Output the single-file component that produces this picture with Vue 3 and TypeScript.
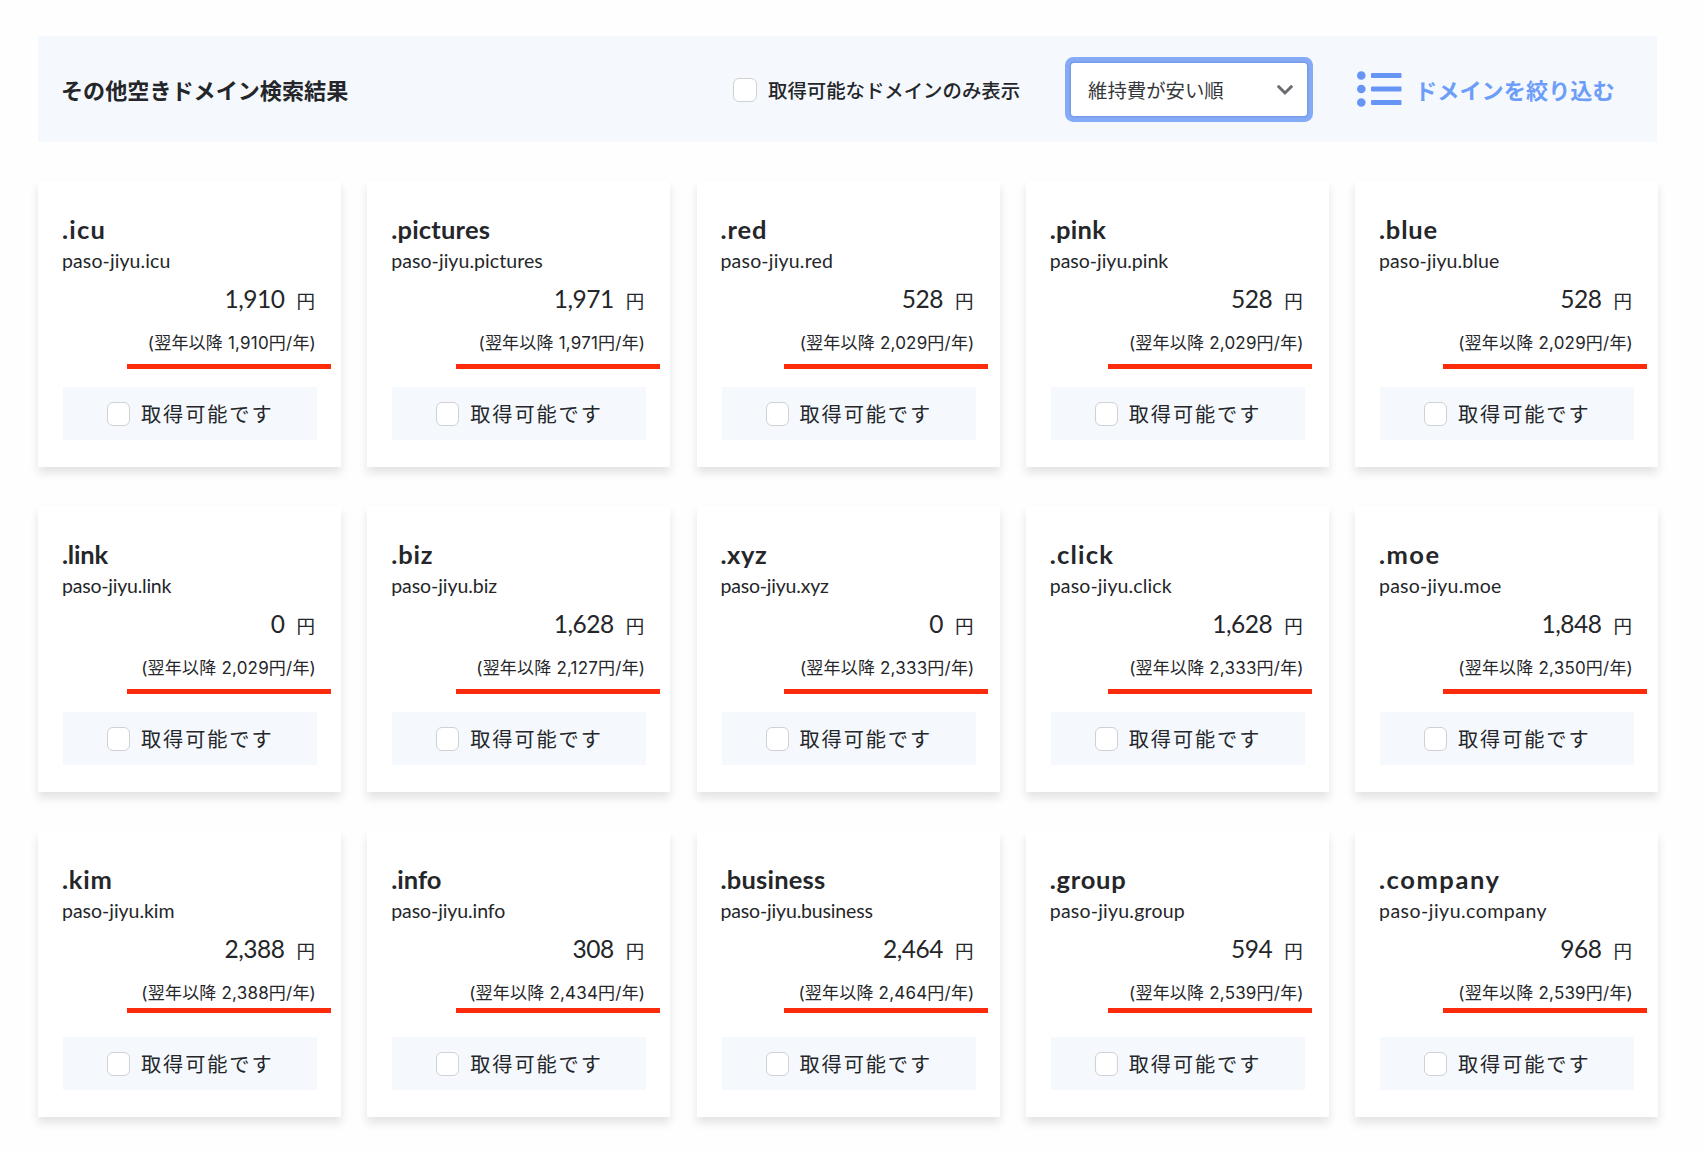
<script setup lang="ts">
import { ref } from 'vue'

interface Domain {
  tld: string
  price: string
  renewal: string
  tldWidth: number
  nameWidth: number
}

const domains: Domain[] = [
  { tld: 'icu', price: '1,910', renewal: '1,910', tldWidth: 40.5, nameWidth: 106.5 },
  { tld: 'pictures', price: '1,971', renewal: '1,971', tldWidth: 97.5, nameWidth: 150 },
  { tld: 'red', price: '528', renewal: '2,029', tldWidth: 43.5, nameWidth: 110.5 },
  { tld: 'pink', price: '528', renewal: '2,029', tldWidth: 55.5, nameWidth: 117.5 },
  { tld: 'blue', price: '528', renewal: '2,029', tldWidth: 56.5, nameWidth: 119 },
  { tld: 'link', price: '0', renewal: '2,029', tldWidth: 45.5, nameWidth: 108.5 },
  { tld: 'biz', price: '1,628', renewal: '2,127', tldWidth: 39.5, nameWidth: 105 },
  { tld: 'xyz', price: '0', renewal: '2,333', tldWidth: 44.5, nameWidth: 107.5 },
  { tld: 'click', price: '1,628', renewal: '2,333', tldWidth: 62.5, nameWidth: 121 },
  { tld: 'moe', price: '1,848', renewal: '2,350', tldWidth: 58.5, nameWidth: 121 },
  { tld: 'kim', price: '2,388', renewal: '2,388', tldWidth: 47.5, nameWidth: 110.5 },
  { tld: 'info', price: '308', renewal: '2,434', tldWidth: 48.5, nameWidth: 113 },
  { tld: 'business', price: '2,464', renewal: '2,464', tldWidth: 103.5, nameWidth: 151 },
  { tld: 'group', price: '594', renewal: '2,539', tldWidth: 74.5, nameWidth: 134 },
  { tld: 'company', price: '968', renewal: '2,539', tldWidth: 119.5, nameWidth: 166.5 },
]

const onlyAvailable = ref(false)
const selected = ref<string[]>([])

// Tracking that sets a line of Latin text to the given width
const ctx = document.createElement('canvas').getContext('2d')
function tracking(text: string, font: string, width: number): string {
  if (!ctx) return '0px'
  ctx.font = font
  const m = ctx.measureText(text)
  const ink = m.actualBoundingBoxRight + m.actualBoundingBoxLeft
  return ((width - ink) / (text.length - 1)).toFixed(3) + 'px'
}
</script>

<template>
  <main class="page">
    <header class="bar">
      <h1 class="heading">その他空きドメイン検索結果</h1>
      <label class="only">
        <input v-model="onlyAvailable" type="checkbox" class="check" />
        <span>取得可能なドメインのみ表示</span>
      </label>
      <button type="button" class="sort">
        <span>維持費が安い順</span>
        <svg width="18" height="12" viewBox="0 0 18 12" fill="none">
          <path d="M1.8 1.8 9 9l7.200-7.200" stroke="#6b6c70" stroke-width="3" />
        </svg>
      </button>
      <a class="narrow">
        <svg width="45" height="36" viewBox="0 0 45 36" fill="#6795f5">
          <circle cx="4.300" cy="4.500" r="4.300" />
          <circle cx="4.300" cy="18" r="4.300" />
          <circle cx="4.300" cy="31.500" r="4.300" />
          <rect x="14" y="2" width="30.500" height="5" rx="1" />
          <rect x="14" y="15.500" width="30.500" height="5" rx="1" />
          <rect x="14" y="29" width="30.500" height="5" rx="1" />
        </svg>
        <span>ドメインを絞り込む</span>
      </a>
    </header>

    <section class="grid">
      <article v-for="d in domains" :key="d.tld" class="card">
        <h2 class="tld" :style="{ letterSpacing: tracking('.' + d.tld, '700 25.5px Lato', d.tldWidth) }">.{{ d.tld }}</h2>
        <p class="name" :style="{ letterSpacing: tracking('paso-jiyu.' + d.tld, '400 19.5px Lato', d.nameWidth) }">paso-jiyu.{{ d.tld }}</p>
        <p class="price"><span class="amount">{{ d.price }}</span><span class="yen">円</span></p>
        <p class="renewal">(翌年以降 {{ d.renewal }}円/年)</p>
        <label class="take">
          <input v-model="selected" type="checkbox" :value="d.tld" class="check small" />
          <span>取得可能です</span>
        </label>
        <i class="mark"></i>
      </article>
    </section>
  </main>
</template>

<style>
body {
  margin: 0;
  background: #fefefe;
}
</style>

<style scoped>
.page {
  box-sizing: border-box;
  width: 1704px;
  height: 1152px;
  padding: 36px 45px 0 38px;
  overflow: hidden;
  color: #242629;
  font-family: 'Noto Sans CJK JP', sans-serif;
}
h1, h2, p {
  margin: 0;
}
.bar {
  box-sizing: border-box;
  display: flex;
  align-items: center;
  width: 1619px;
  height: 106px;
  padding-left: 23px;
  background: #f5f9fe;
}
.heading {
  width: 672px;
  font-size: 22.1px;
  line-height: 32px;
  font-weight: 700;
  white-space: nowrap;
}
.check {
  appearance: none;
  box-sizing: border-box;
  flex: none;
  width: 24px;
  height: 24px;
  margin: 0;
  border: 1.5px solid #d0d1d5;
  border-radius: 6px;
  background: #fff;
}
.only {
  display: flex;
  align-items: center;
  gap: 11px;
  width: 338px;
  padding-top: 1px;
  font-size: 19.4px;
  line-height: 28px;
  font-weight: 500;
  white-space: nowrap;
}
.sort {
  box-sizing: border-box;
  display: flex;
  align-items: center;
  justify-content: space-between;
  flex: none;
  width: 236px;
  height: 53px;
  margin: 0;
  padding: 2px 13px 0 17px;
  border: 0;
  border-radius: 3px;
  background: #fff;
  box-shadow: 0 0 0 1.5px #779ce8, 0 0 0 6px #85abf7;
  color: #36383b;
  font: 400 19.4px/28px 'Noto Sans CJK JP', sans-serif;
}
.narrow {
  display: flex;
  align-items: center;
  gap: 13px;
  margin-left: 50px;
  color: #6c9df8;
  font-size: 22.1px;
  line-height: 32px;
  font-weight: 700;
  white-space: nowrap;
}
.narrow span {
  letter-spacing: 0.1px;
}
.grid {
  display: grid;
  grid-template-columns: repeat(5, 303px);
  justify-content: space-between;
  row-gap: 39px;
  width: 1620px;
  margin-top: 39px;
}
.card {
  position: relative;
  box-sizing: border-box;
  display: flex;
  flex-direction: column;
  height: 286px;
  padding: 32px 25px 0 24px;
  background: #fff;
  box-shadow: 0 6px 9px rgba(0, 0, 0, 0.11);
}
.tld {
  font: 700 25.5px/32px Lato, sans-serif;
  white-space: nowrap;
}
.name {
  font: 400 19.5px/32px Lato, sans-serif;
  white-space: nowrap;
}
.price {
  display: flex;
  align-items: baseline;
  justify-content: flex-end;
  gap: 12px;
  padding-right: 1px;
  line-height: 40px;
  height: 40px;
  margin-top: 2px;
}
.amount {
  font: 400 24.5px/40px Lato, sans-serif;
  letter-spacing: -0.5px;
}
.yen {
  font-size: 18.5px;
}
.renewal {
  height: 32px;
  margin-top: 8px;
  font: 400 17px/32px Inter, 'Noto Sans CJK JP', sans-serif;
  letter-spacing: 0.2px;
  text-align: right;
  white-space: nowrap;
}
.take {
  box-sizing: border-box;
  display: flex;
  align-items: center;
  gap: 11px;
  width: 254px;
  height: 53px;
  margin-top: 28px;
  margin-left: 1px;
  padding-left: 44px;
  background: #f5f9fe;
  font-size: 20.2px;
  line-height: 30px;
  letter-spacing: 1.9px;
  white-space: nowrap;
}
.small {
  width: 23px;
}
.mark {
  position: absolute;
  left: 89px;
  bottom: 98.500px;
  width: 204px;
  height: 5px;
  background: #fb2b0b;
}
.card:nth-child(5n + 3) .mark {
  left: 87px;
}
.card:nth-child(5n + 4) .mark {
  left: 82px;
}
.card:nth-child(5n) .mark {
  left: 88px;
}
.card:nth-child(n + 11) .mark {
  bottom: 104.500px;
}
</style>
